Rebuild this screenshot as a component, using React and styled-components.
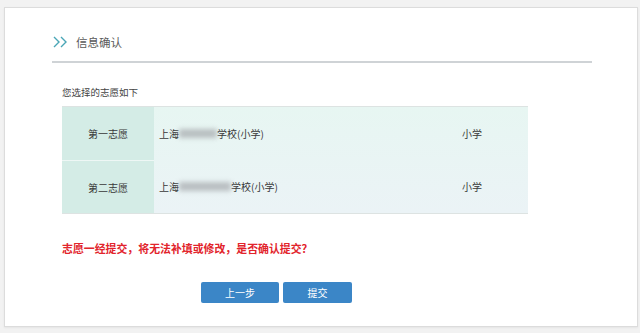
import React from 'react';
import styled, { createGlobalStyle } from 'styled-components';

const GlobalStyle = createGlobalStyle`
  html, body {
    margin: 0;
    padding: 0;
    background: #f2f2f2;
    font-family: "Noto Sans CJK SC", "Noto Sans", sans-serif;
  }
`;

const Page = styled.div`
  width: 640px;
  height: 333px;
  padding: 7px 2px 0 4px;
  box-sizing: border-box;
`;

const Panel = styled.div`
  width: 634px;
  height: 320px;
  box-sizing: border-box;
  background: #fff;
  border: 1px solid #dcdcdc;
  box-shadow: 0 1px 2px rgba(0, 0, 0, 0.06);
`;

const Header = styled.div`
  display: flex;
  align-items: center;
  gap: 8px;
  margin-left: 47px;
  width: 539px;
  height: 20px;
  padding: 24px 0 9px 1px;
  border-bottom: 2px solid #cfd3d6;
`;

const Title = styled.span`
  font-size: 11.5px;
  color: #5a5a5a;
  line-height: 20px;
`;

const Content = styled.div`
  padding: 22px 0 0 57px;
`;

const Subtitle = styled.div`
  font-size: 9.5px;
  color: #444;
  line-height: 14px;
`;

const Table = styled.div`
  margin-top: 7px;
  width: 466px;
  display: grid;
  grid-template-columns: 92px 308px 1fr;
  grid-auto-rows: 53px;
  border-top: 1px solid #dde3e2;
  border-bottom: 1px solid #dde3e2;
  background: linear-gradient(180deg, #e7f6f2 0%, #ebf3f6 100%);
  font-size: 10px;
  color: #383838;
`;

const Cell = styled.div`
  display: flex;
  align-items: center;
  justify-content: ${(p) => (p.$center ? 'center' : 'flex-start')};
  padding-left: ${(p) => (p.$center ? '0' : '5px')};
  background: ${(p) => (p.$head ? '#d4ece6' : 'transparent')};
  border-top: ${(p) => (p.$split ? '1px solid rgba(255,255,255,0.6)' : 'none')};
`;

const Extra = styled(Cell)`
  padding-left: 0;
`;

const Blur = styled.span`
  display: inline-block;
  width: ${(p) => p.$w}px;
  height: 9px;
  background: #a9adb0;
  filter: blur(2.5px);
  opacity: 0.75;
`;

const Warning = styled.div`
  margin-top: 26px;
  font-size: 10.9px;
  font-weight: 600;
  color: #e2242c;
  line-height: 16px;
`;

const Actions = styled.div`
  display: flex;
  gap: 4px;
  margin: 26px 0 0 139px;
`;

const Button = styled.button`
  width: ${(p) => p.$w}px;
  height: 21px;
  border: none;
  border-radius: 2px;
  background: #3b86c7;
  color: #fff;
  font-family: inherit;
  font-size: 10px;
  padding: 0;
  cursor: pointer;
`;

const Chevrons = () => (
  <svg width="15" height="12" viewBox="0 0 15 12" fill="none">
    <path d="M1 1l5 5-5 5M8 1l5 5-5 5" stroke="#4aa6b6" strokeWidth="1.4" />
  </svg>
);

const choices = [
  { label: '第一志愿', blur: 38, extra: '小学' },
  { label: '第二志愿', blur: 52, extra: '小学' },
];

export default function App() {
  return (
    <>
      <GlobalStyle />
      <Page>
        <Panel>
          <Header>
            <Chevrons />
            <Title>信息确认</Title>
          </Header>
          <Content>
            <Subtitle>您选择的志愿如下</Subtitle>
            <Table>
              {choices.map((c, i) => (
                <React.Fragment key={c.label}>
                  <Cell $head $center $split={i > 0}>{c.label}</Cell>
                  <Cell>
                    上海<Blur $w={c.blur} />学校(小学)
                  </Cell>
                  <Extra>{c.extra}</Extra>
                </React.Fragment>
              ))}
            </Table>
            <Warning>志愿一经提交，将无法补填或修改，是否确认提交？</Warning>
            <Actions>
              <Button $w={78}>上一步</Button>
              <Button $w={69}>提交</Button>
            </Actions>
          </Content>
        </Panel>
      </Page>
    </>
  );
}
